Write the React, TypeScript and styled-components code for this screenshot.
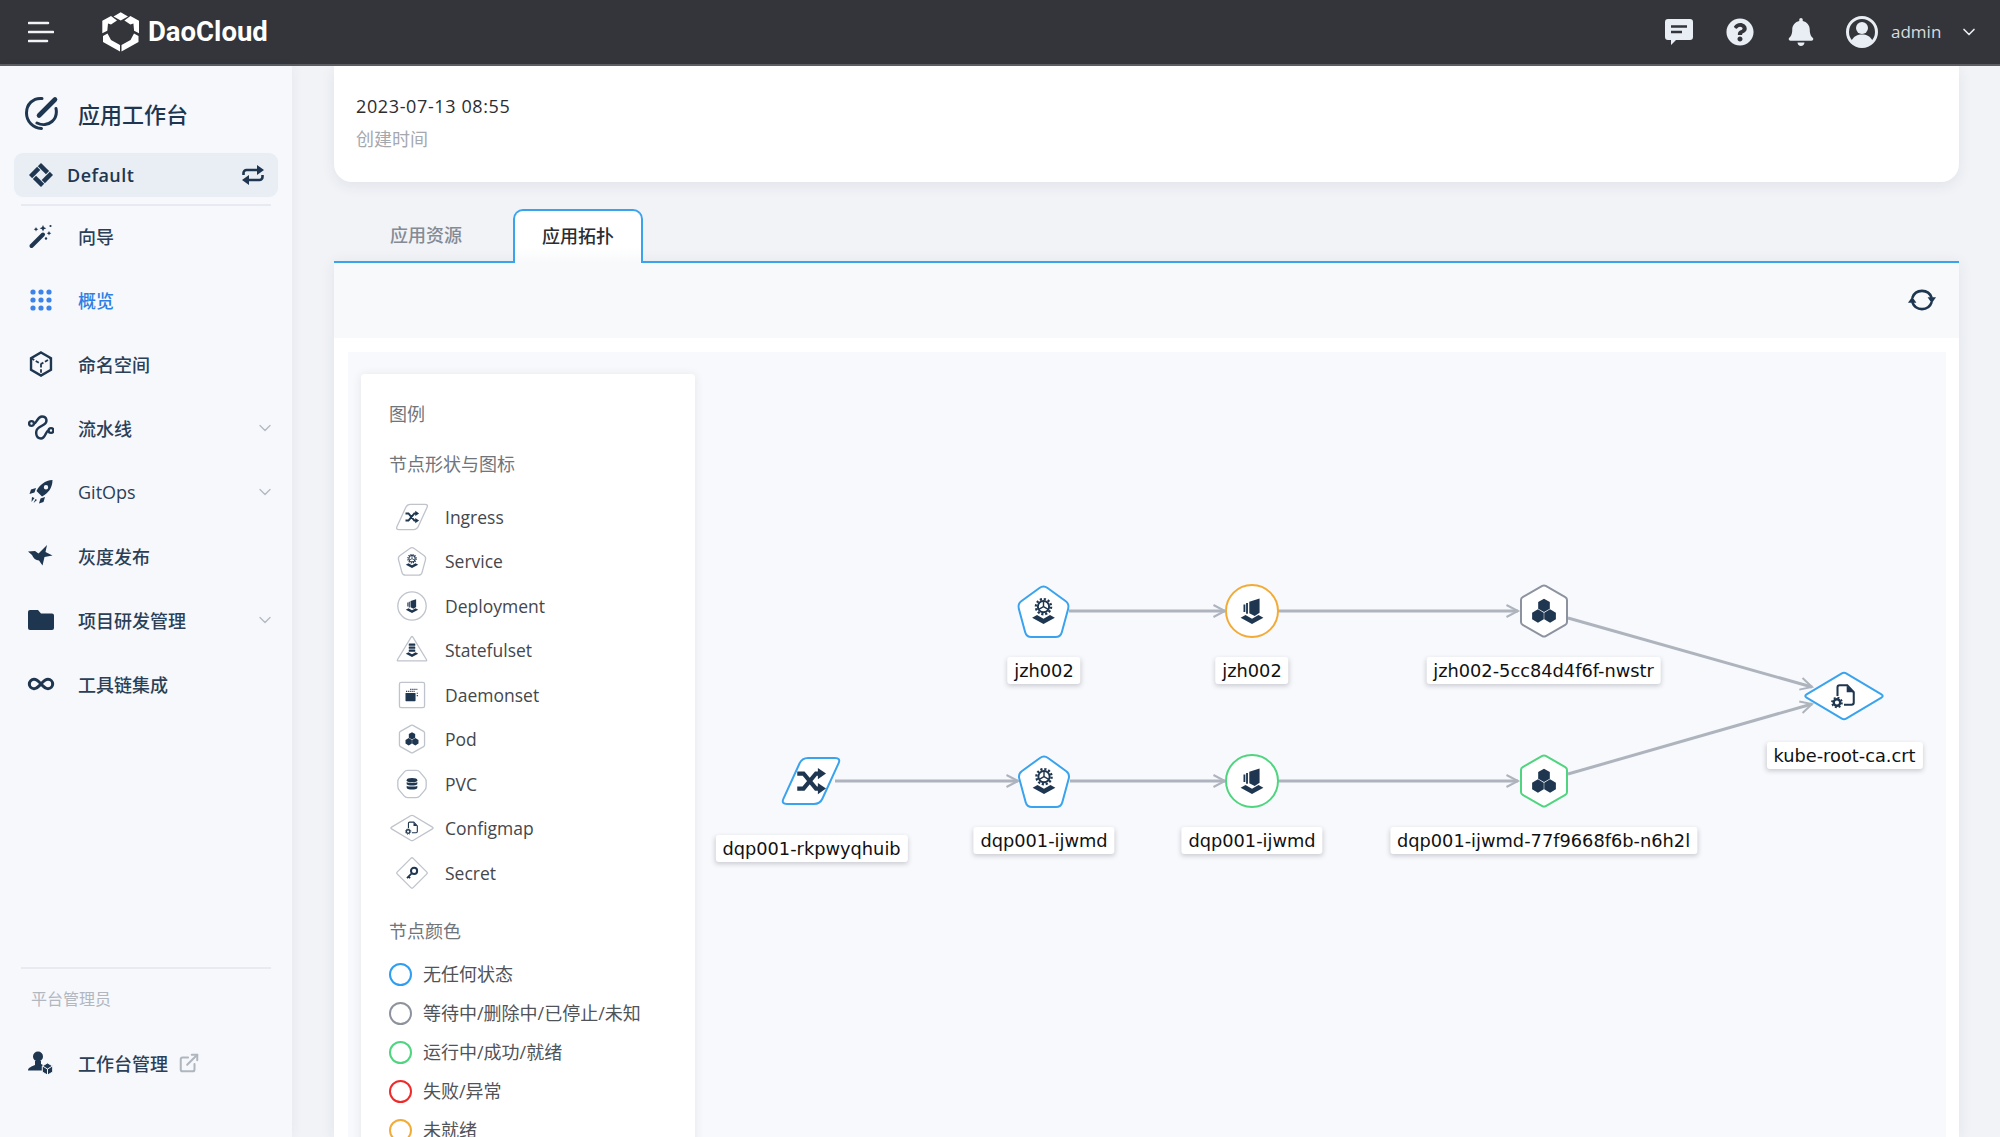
import React from "react";
import styled, { createGlobalStyle } from "styled-components";
import { ChevronDown, ExternalLink, Infinity as InfinityIcon } from "lucide-react";
import { FaBell, FaQuestionCircle } from "react-icons/fa";

const NAVY = "#1f3650";
const BLUE = "#3aa3ee";
const GREEN = "#4fd47f";
const GREY = "#8d939e";
const ORANGE = "#f2ab36";
const RED = "#ee2a2a";
const LEGEND_LINE = "#bfc4cc";
const SANS = `"Open Sans", "Noto Sans CJK SC", sans-serif`;

const Global = createGlobalStyle`
  html, body { margin: 0; padding: 0; background: #f1f3f7; }
  body { font-family: ${SANS}; overflow: hidden; }
  * { box-sizing: border-box; }
`;

const Page = styled.div`
  width: 2000px;
  height: 1137px;
  display: flex;
  flex-direction: column;
  overflow: hidden;
`;
const TopBar = styled.header`
  height: 66px;
  flex: none;
  background: #33353b;
  border-bottom: 2px solid #5c5e63;
  display: flex;
  align-items: center;
  padding: 0 21px 0 28px;
`;
const Burger = styled.svg`
  width: 26px;
  height: 24px;
  margin-right: 48px;
`;
const Logo = styled.svg`
  width: 37px;
  height: 40px;
  margin-right: 9px;
`;
const Brand = styled.span`
  font-family: "Roboto", sans-serif;
  font-weight: 700;
  font-size: 27.5px;
  margin-bottom: 2px;
  color: #fff;
`;
const TopRight = styled.div`
  margin-left: auto;
  display: flex;
  align-items: center;
  color: #e9edf4;
`;
const TopIcon = styled.span`
  width: 40px;
  height: 40px;
  margin-right: 21px;
  display: flex;
  align-items: center;
  justify-content: center;
`;
const Avatar = styled(TopIcon)`
  margin-right: 9px;
`;
const UserName = styled.span`
  width: 68px;
  font-size: 17px;
  margin-bottom: 2px;
  color: #d9dbde;
  font-weight: 400;
`;
const Body = styled.div`
  flex: 1;
  display: flex;
  min-height: 0;
`;
const Sidebar = styled.aside`
  width: 292px;
  flex: none;
  background: #f6f8fc;
  box-shadow: 2px 0 10px rgba(40, 50, 70, 0.05);
  display: flex;
  flex-direction: column;
  color: ${NAVY};
  position: relative;
  z-index: 1;
`;
const SideTitle = styled.div`
  height: 87px;
  display: flex;
  align-items: center;
  padding: 6px 0 0 25px;
  gap: 19px;
  font-size: 22px;
  font-weight: 500;
`;
const WorkspacePill = styled.div`
  height: 44px;
  margin: 0 14px;
  padding: 0 13px 0 15px;
  background: #e9eef4;
  border-radius: 9px;
  display: flex;
  align-items: center;
  gap: 14px;
  font-size: 18px;
  font-weight: 600;
`;
const PillName = styled.span`
  flex: 1;
  letter-spacing: 0.45px;
`;
const SideRule = styled.div`
  height: 2px;
  margin: 7px 21px -2px;
  background: #e7eaf0;
  flex: none;
`;
const NavItem = styled.div<{ $active?: boolean }>`
  height: 64px;
  flex: none;
  display: flex;
  align-items: center;
  padding: 0 17px 0 24px;
  gap: 20px;
  font-size: 18px;
  font-weight: 500;
  color: ${(p) => (p.$active ? "#2e7fe3" : "#2b3f57")};
`;
const NavGlyph = styled.span`
  width: 34px;
  height: 34px;
  flex: none;
  display: flex;
  align-items: center;
  justify-content: center;
  color: ${NAVY};
`;
const NavText = styled.span`
  flex: 1;
  display: flex;
  align-items: center;
  gap: 10px;
`;
const SideFooter = styled.div`
  margin-top: auto;
  padding-bottom: 42px;
`;
const FooterLabel = styled.div`
  font-size: 16px;
  line-height: 24px;
  margin: 20px 0 20px 31px;
  color: #b2b7bf;
  font-weight: 400;
`;
const Main = styled.main`
  flex: 1;
  min-width: 0;
  padding: 0 41px 0 42px;
  display: flex;
  flex-direction: column;
  overflow: hidden;
`;
const InfoCard = styled.section`
  height: 116px;
  flex: none;
  background: #fff;
  border-radius: 0 0 18px 18px;
  box-shadow: 0 4px 14px rgba(40, 50, 70, 0.08);
  padding: 26px 22px 0;
`;
const InfoValue = styled.div`
  font-size: 18px;
  line-height: 28px;
  letter-spacing: 0.62px;
  color: #2b2d30;
`;
const InfoLabel = styled.div`
  font-size: 18px;
  line-height: 28px;
  margin-top: 5px;
  color: #a5a9ae;
`;
const Tabs = styled.div`
  height: 54px;
  flex: none;
  margin-top: 27px;
  margin-bottom: -2px;
  display: flex;
  position: relative;
  z-index: 2;
`;
const Tab = styled.div<{ $active?: boolean; $w: number }>`
  width: ${(p) => p.$w}px;
  height: 54px;
  padding: 0 0 5px ${(p) => (p.$active ? 0 : 5)}px;
  display: flex;
  align-items: center;
  justify-content: center;
  font-size: 18px;
  font-weight: 500;
  color: ${(p) => (p.$active ? "#2b2d30" : "#848b94")};
  ${(p) =>
    p.$active
      ? `background: linear-gradient(#fff 70%, #f8f9fb);
         border: 2px solid ${BLUE};
         border-bottom: none;
         border-radius: 10px 10px 0 0;`
      : ""}
`;
const Panel = styled.section`
  flex: 1;
  min-height: 0;
  background: #fff;
  border-top: 2px solid ${BLUE};
  box-shadow: 0 2px 14px rgba(40, 50, 70, 0.08);
  display: flex;
  flex-direction: column;
`;
const Toolbar = styled.div`
  height: 75px;
  flex: none;
  background: #f8f9fb;
  display: flex;
  align-items: center;
  justify-content: flex-end;
  padding: 0 23px 2px 0;
  color: ${NAVY};
`;
const CanvasWrap = styled.div`
  flex: 1;
  min-height: 0;
  padding: 14px 13px 0 14px;
  display: flex;
`;
const Canvas = styled.div`
  flex: 1;
  position: relative;
  background: #f8f9fc;
  padding: 22px 0 0 13px;
  overflow: hidden;
`;
const Legend = styled.div`
  width: 334px;
  height: 800px;
  background: #fff;
  border-radius: 4px 4px 0 0;
  box-shadow: 0 1px 10px rgba(40, 50, 70, 0.1);
  padding: 28px 28px 0;
  position: relative;
  z-index: 1;
`;
const LegendHead = styled.div<{ $mt?: number }>`
  font-size: 18px;
  line-height: 24px;
  margin-top: ${(p) => p.$mt ?? 0}px;
  color: #70757c;
`;
const ShapeList = styled.div`
  margin-top: 18.5px;
`;
const ShapeRow = styled.div`
  height: 44.5px;
  display: flex;
  align-items: center;
  gap: 10px;
  font-size: 17.5px;
  color: #44474c;
`;
const ShapeSvg = styled.svg`
  width: 46px;
  height: 36px;
  flex: none;
`;
const ColorList = styled.div`
  margin-top: 10.5px;
`;
const ColorRow = styled.div`
  height: 39px;
  display: flex;
  align-items: center;
  gap: 12px;
  font-size: 18px;
  color: #505358;
`;
const Dot = styled.span<{ $c: string }>`
  width: 23px;
  height: 23px;
  flex: none;
  margin: 2px -1px 0 0;
  border-radius: 50%;
  border: 2px solid ${(p) => p.$c};
`;
const GraphSvg = styled.svg`
  position: absolute;
  left: 0;
  top: 0;
  width: 1598px;
  height: 785px;
`;
const GraphLabel = styled.span<{ $x: number; $y: number }>`
  position: absolute;
  left: ${(p) => p.$x - 348}px;
  top: ${(p) => p.$y - 352}px;
  transform: translateX(-50%);
  height: 27px;
  padding: 0 7px;
  display: flex;
  align-items: center;
  white-space: nowrap;
  background: #fff;
  border-radius: 3px;
  box-shadow: 0 2px 5px rgba(30, 40, 60, 0.22);
  font-family: "DejaVu Sans", sans-serif;
  font-size: 17.8px;
  color: #111;
`;

type Pt = [number, number];
function rounded(pts: Pt[], r: number): string {
  const n = pts.length;
  let d = "";
  for (let i = 0; i < n; i++) {
    const p = pts[i];
    const a = pts[(i + n - 1) % n];
    const b = pts[(i + 1) % n];
    const la = Math.hypot(a[0] - p[0], a[1] - p[1]);
    const lb = Math.hypot(b[0] - p[0], b[1] - p[1]);
    const s: Pt = [p[0] + ((a[0] - p[0]) * r) / la, p[1] + ((a[1] - p[1]) * r) / la];
    const e: Pt = [p[0] + ((b[0] - p[0]) * r) / lb, p[1] + ((b[1] - p[1]) * r) / lb];
    d += `${i === 0 ? "M" : "L"}${s[0].toFixed(2)} ${s[1].toFixed(2)}Q${p[0]} ${p[1]} ${e[0].toFixed(2)} ${e[1].toFixed(2)}`;
  }
  return d + "Z";
}
const hexPts = (cx: number, cy: number, r: number) =>
  [0, 1, 2, 3, 4, 5]
    .map((i) => {
      const t = (Math.PI / 3) * i - Math.PI / 2;
      return `${(cx + r * Math.cos(t)).toFixed(2)},${(cy + r * Math.sin(t)).toFixed(2)}`;
    })
    .join(" ");

const Tray = () => <path d="M12 24 L1.5 18.3 L6 15.8 L12 19.2 L18 15.8 L22.5 18.3Z" fill={NAVY} />;

type Kind =
  | "ingress" | "service" | "deployment" | "statefulset" | "daemonset"
  | "pod" | "pvc" | "configmap" | "secret";

function Glyph({ kind }: { kind: Kind }) {
  switch (kind) {
    case "ingress":
      return (
        <g>
          <path d="M1 6h5l10 12h3M1 18h5L16 6h3" fill="none" stroke={NAVY} strokeWidth="3.4" />
          <polygon points="17.5,1.5 24,6 17.5,10.5" fill={NAVY} />
          <polygon points="17.5,13.5 24,18 17.5,22.5" fill={NAVY} />
        </g>
      );
    case "service":
      return (
        <g>
          <circle cx="12" cy="8" r="7" fill="none" stroke={NAVY} strokeWidth="2.2" strokeDasharray="2 1.67" />
          <circle cx="12" cy="8" r="5.2" fill="none" stroke={NAVY} strokeWidth="1.8" />
          <path d="M12 8V3M12 8l4.4 2.5M12 8l-4.4 2.5" stroke={NAVY} strokeWidth="1.3" />
          <Tray />
        </g>
      );
    case "deployment":
      return (
        <g>
          <path d="M9.5 3.4 L19 0.5 V13.5 L14.5 16.5 L9.5 14Z" fill={NAVY} />
          <path d="M7.4 4.6V14.5M5 6V13" stroke={NAVY} strokeWidth="1.7" fill="none" />
          <Tray />
        </g>
      );
    case "statefulset":
      return (
        <g>
          <rect x="6.5" y="1" width="11" height="4" rx="1" fill={NAVY} />
          <rect x="6.5" y="6" width="11" height="4" rx="1" fill={NAVY} />
          <rect x="6.5" y="11" width="11" height="4" rx="1" fill={NAVY} />
          <Tray />
        </g>
      );
    case "daemonset":
      return (
        <g>
          <rect x="1" y="8.5" width="17" height="14" rx="1" fill={NAVY} />
          <path d="M2 6h15M9 2.500h12M20 9h3M20 13h3" stroke={NAVY} strokeWidth="2" strokeDasharray="2 1.5" />
        </g>
      );
    case "pod":
      return (
        <g fill={NAVY}>
          <polygon points={hexPts(12, 6.8, 6.2)} />
          <polygon points={hexPts(6.4, 16.6, 6.2)} />
          <polygon points={hexPts(17.6, 16.6, 6.2)} />
        </g>
      );
    case "pvc":
      return (
        <g fill={NAVY}>
          <ellipse cx="12" cy="5.5" rx="9" ry="3.5" />
          <path d="M3 8.8c2 2 16 2 18 0v3.6c-2 3-16 3-18 0z" />
          <path d="M3 14.8c2 2 16 2 18 0v3.8c-2 3.4-16 3.4-18 0z" />
        </g>
      );
    case "configmap":
      return (
        <g>
          <path d="M6 12V4a2 2 0 0 1 2-2h7l6 6.5V18a2 2 0 0 1-2 2h-7" fill="none" stroke={NAVY} strokeWidth="1.9" />
          <path d="M14.5 2.5V8.5h6.5z" fill={NAVY} />
          <circle cx="5.5" cy="18" r="3" fill="none" stroke={NAVY} strokeWidth="2.2" />
          <circle cx="5.5" cy="18" r="4.6" fill="none" stroke={NAVY} strokeWidth="1.6" strokeDasharray="1.8 1.8" />
        </g>
      );
    case "secret":
      return (
        <g>
          <circle cx="15.5" cy="8.5" r="5.2" fill="none" stroke={NAVY} strokeWidth="3.4" />
          <path d="M11.5 12.5 L3.5 20.5M6 18l2.8 2.8" stroke={NAVY} strokeWidth="3" fill="none" />
        </g>
      );
  }
}

const SHAPES: Record<Kind, string> = {
  ingress: rounded([[-9, -23], [30, -23], [9, 23], [-30, 23]], 6),
  service: rounded([[0, -26], [26, -7], [17, 26], [-17, 26], [-26, -7]], 5),
  deployment: "M-26 0a26 26 0 1 0 52 0a26 26 0 1 0 -52 0Z",
  statefulset: rounded([[0, -26], [28, 20], [-28, 20]], 3),
  daemonset: rounded([[-23, -23], [23, -23], [23, 23], [-23, 23]], 3),
  pod: rounded([[0, -26], [23, -13], [23, 13], [0, 26], [-23, 13], [-23, -13]], 2),
  pvc: rounded([[-12, -25], [12, -25], [26, -8], [26, 8], [12, 25], [-12, 25], [-26, 8], [-26, -8]], 4),
  configmap: rounded([[-40, 0], [0, -24], [40, 0], [0, 24]], 3),
  secret: rounded([[-29, 0], [0, -29], [29, 0], [0, 29]], 3),
};

function Node({ kind, color, x = 0, y = 0, glyph = 26, line = 2 }: {
  kind: Kind; color: string; x?: number; y?: number; glyph?: number; line?: number;
}) {
  return (
    <g transform={`translate(${x} ${y})`}>
      <path d={SHAPES[kind]} fill="#fff" stroke={color} strokeWidth={line} />
      <g transform={`translate(${-glyph / 2} ${-glyph / 2}) scale(${glyph / 24})`}>
        <Glyph kind={kind} />
      </g>
    </g>
  );
}

function Edge({ a, b }: { a: Pt; b: Pt }) {
  const t = Math.atan2(b[1] - a[1], b[0] - a[0]);
  const arm = (d: number): string => {
    const ang = t + Math.PI + d;
    return `${(b[0] + 13 * Math.cos(ang)).toFixed(2)} ${(b[1] + 13 * Math.sin(ang)).toFixed(2)}`;
  };
  return (
    <g fill="none" stroke="#aeb4bd">
      <path d={`M${a[0]} ${a[1]}L${b[0]} ${b[1]}`} strokeWidth="3" />
      <path d={`M${arm(0.48)}L${b[0]} ${b[1]}L${arm(-0.48)}`} strokeWidth="2" />
    </g>
  );
}

const BurgerIcon = () => (
  <Burger viewBox="0 0 26 24">
    <path d="M1 3h19M1 12h24M1 21h18" stroke="#f2f3f5" strokeWidth="2.6" strokeLinecap="round" />
  </Burger>
);

const LogoIcon = () => (
  <Logo viewBox="0 0 37 40">
    <g fill="#fff">
      <polygon points="18.7,0.3 26,4.500 18.7,8.500 11.500,4.500" />
      <polygon points="9,3.900 15,8.500 9,12.500 6,11.500 5.300,18.700 0.300,21.300 0.300,8.700" />
      <polygon points="28.400,3.900 22.400,8.500 28.400,12.500 31.400,11.500 32.100,18.700 37,21.300 37,8.700" />
      <polygon points="1,24 5.500,21.500 9,28 18,33 18,39.500 1,30" />
      <polygon points="36.500,24 32,21.500 28.500,28 19.500,33 19.500,39.500 36.500,30" />
    </g>
  </Logo>
);

const ChatIcon = () => (
  <svg width="30" height="30" viewBox="0 0 30 30">
    <path d="M4 2h22a3 3 0 0 1 3 3v15a3 3 0 0 1-3 3H12l-5 5v-5H4a3 3 0 0 1-3-3V5a3 3 0 0 1 3-3z" fill="#e9edf4" />
    <path d="M7 9.5h16M7 15h11" stroke="#33353b" strokeWidth="2.6" />
  </svg>
);

const AvatarIcon = () => (
  <svg width="32" height="32" viewBox="0 0 32 32">
    <circle cx="16" cy="16" r="14.5" fill="none" stroke="#e9edf4" strokeWidth="3" />
    <circle cx="16" cy="12" r="6" fill="#e9edf4" />
    <path d="M5.5 25c2-5 6-6.5 10.5-6.5s8.500 1.500 10.500 6.500c-3 3-6.500 4.500-10.500 4.500s-7.500-1.500-10.500-4.500z" fill="#e9edf4" />
  </svg>
);

const WorkspaceIcon = () => (
  <svg width="34" height="34" viewBox="0 0 34 34" fill="none" stroke={NAVY} strokeWidth="3" strokeLinecap="round">
    <path d="M17 2.500C8 1.500 1.500 8.500 1.500 17c0 8.500 6.500 15 15 15.500" />
    <path d="M12 27c5 2.500 11 2 15-1.500 4-3.500 5-8 4-13" />
    <path d="M30 3.500 L14 19.500" strokeWidth="4.600" />
  </svg>
);

const DefaultIcon = () => (
  <svg width="24" height="24" viewBox="0 0 24 24" fill={NAVY} style={{ flex: "none" }}>
    <g transform="rotate(45 12 12)">
      <rect x="3.500" y="3.500" width="11.500" height="4.500" />
      <rect x="16" y="3.500" width="4.500" height="11.500" />
      <rect x="9" y="16" width="11.500" height="4.500" />
      <rect x="3.500" y="9" width="4.500" height="11.500" />
    </g>
  </svg>
);

const SwapIcon = () => (
  <svg width="24" height="24" viewBox="0 0 24 24" style={{ flex: "none" }} fill={NAVY}>
    <path d="M2.500 12V10a3 3 0 0 1 3-3H17M21.500 12v2a3 3 0 0 1-3 3H7" fill="none" stroke={NAVY} strokeWidth="2.600" />
    <polygon points="16,2 23,7 16,12" />
    <polygon points="8,12 1,17 8,22" />
  </svg>
);

const WandIcon = () => (
  <svg width="26" height="26" viewBox="0 0 26 26" fill={NAVY}>
    <path d="M3.500 23 L15 11.500" stroke={NAVY} strokeWidth="4" strokeLinecap="round" />
    <path d="M15 2l1 2.300 2.300 1-2.300 1-1 2.300-1-2.300-2.300-1 2.300-1z" />
    <path d="M8 4l.7 1.600 1.600.7-1.600.7-.7 1.600-.7-1.600-1.600-.7 1.600-.7z" />
    <path d="M21 8l.7 1.600 1.600.7-1.600.7-.7 1.600-.7-1.600-1.600-.7 1.600-.7z" />
    <circle cx="22.500" cy="3" r="1.100" />
    <circle cx="18" cy="15.500" r="1.200" />
  </svg>
);

const DotsIcon = () => (
  <svg width="22" height="22" viewBox="0 0 22 22" fill="#3b83e6">
    {[3, 11, 19].flatMap((y) => [3, 11, 19].map((x) => <circle key={`${x}-${y}`} cx={x} cy={y} r="2.600" />))}
  </svg>
);

const NamespaceIcon = () => (
  <svg width="26" height="26" viewBox="0 0 26 26" fill="none" stroke={NAVY}>
    <polygon points={hexPts(13, 13, 11.500)} strokeWidth="2.400" />
    <path d="M3.200 7.300 L13 13 L22.800 7.300 M13 13 V24.500" strokeWidth="1.800" strokeDasharray="3.500 1.800" />
  </svg>
);

const PipelineIcon = () => (
  <svg width="26" height="26" viewBox="0 0 26 26" fill="none" stroke={NAVY} strokeWidth="2.400">
    <circle cx="3.500" cy="8.500" r="2.400" />
    <circle cx="23" cy="15.500" r="2.400" />
    <path d="M6 8.500C9 8.500 9 1.500 14 1.500C19 1.500 20 7 16 9.500L11 12.500C7 15 7 23.500 13 23.500C17.500 23.500 17.500 16 20.500 15.500" />
  </svg>
);

const RocketIcon = () => (
  <svg width="26" height="26" viewBox="0 0 26 26" fill={NAVY}>
    <path fillRule="evenodd" d="M24.500 1C17 1.500 11.500 6 8.500 12L14 17.500C20 14.500 24.500 9 24.500 1ZM18 6a2.200 2.200 0 1 1 0 4.400a2.200 2.200 0 0 1 0-4.400Z" />
    <path d="M8 9 L3 10.500 L1.500 15 L6.500 13.500Z" />
    <path d="M17 18 L15.500 23 L11 24.500 L12.500 19.500Z" />
    <path d="M4 18l2.500 1-3 4z" />
    <path d="M7.500 20l1.500 1-3.500 3z" />
  </svg>
);

const BirdIcon = () => (
  <svg width="26" height="22" viewBox="0 0 26 22" fill={NAVY}>
    <path d="M0 6.500 L7 6 L10.500 8.500 L19 0 L17.500 7 L24.500 10.500 L16.500 12 L14.500 20.500 L11 15.500 Q6 15 4 10 Z" />
  </svg>
);

const FolderIcon = () => (
  <svg width="26" height="20" viewBox="0 0 26 20" fill={NAVY}>
    <path d="M2 0h8l3 3.500h11a2 2 0 0 1 2 2V18a2 2 0 0 1-2 2H2a2 2 0 0 1-2-2V2a2 2 0 0 1 2-2z" />
  </svg>
);

const AdminIcon = () => (
  <svg width="26" height="24" viewBox="0 0 26 24" fill={NAVY}>
    <circle cx="10" cy="5.500" r="5" />
    <path d="M7 10h6v3l3 1.500v5H0c0-3 4-4 7-5.500z" />
    <polygon points={hexPts(19.500, 18, 6)} stroke="#f6f8fc" strokeWidth="1" />
    <path d="M19.500 18v6M19.500 18l-5-3M19.500 18l5-3" stroke="#f6f8fc" strokeWidth="1" />
  </svg>
);

const RefreshIcon = () => (
  <svg width="28" height="28" viewBox="0 0 26 26" fill="none" stroke={NAVY} strokeWidth="2.400">
    <path d="M4 11A9.500 9.500 0 0 1 22 11" />
    <path d="M22 15A9.500 9.500 0 0 1 4 15" />
    <polygon points="18.200,10.500 26,10.500 22.100,16" fill={NAVY} stroke="none" />
    <polygon points="0,15.500 7.800,15.500 3.900,10" fill={NAVY} stroke="none" />
  </svg>
);

const navItems: { label: string; icon: React.ReactNode; arrow?: boolean; active?: boolean }[] = [
  { label: "向导", icon: <WandIcon /> },
  { label: "概览", icon: <DotsIcon />, active: true },
  { label: "命名空间", icon: <NamespaceIcon /> },
  { label: "流水线", icon: <PipelineIcon />, arrow: true },
  { label: "GitOps", icon: <RocketIcon />, arrow: true },
  { label: "灰度发布", icon: <BirdIcon /> },
  { label: "项目研发管理", icon: <FolderIcon />, arrow: true },
  { label: "工具链集成", icon: <InfinityIcon size={28} strokeWidth={2.6} /> },
];

const shapeRows: { kind: Kind; label: string }[] = [
  { kind: "ingress", label: "Ingress" },
  { kind: "service", label: "Service" },
  { kind: "deployment", label: "Deployment" },
  { kind: "statefulset", label: "Statefulset" },
  { kind: "daemonset", label: "Daemonset" },
  { kind: "pod", label: "Pod" },
  { kind: "pvc", label: "PVC" },
  { kind: "configmap", label: "Configmap" },
  { kind: "secret", label: "Secret" },
];

const colorRows = [
  { c: "#2f9df0", label: "无任何状态" },
  { c: GREY, label: "等待中/删除中/已停止/未知" },
  { c: GREEN, label: "运行中/成功/就绪" },
  { c: RED, label: "失败/异常" },
  { c: ORANGE, label: "未就绪" },
];

const nodes: { kind: Kind; color: string; x: number; y: number; glyph?: number }[] = [
  { kind: "service", color: BLUE, x: 1043.5, y: 611 },
  { kind: "deployment", color: ORANGE, x: 1252, y: 611 },
  { kind: "pod", color: GREY, x: 1544, y: 611 },
  { kind: "ingress", color: BLUE, x: 811, y: 781, glyph: 30 },
  { kind: "service", color: BLUE, x: 1044, y: 781 },
  { kind: "deployment", color: GREEN, x: 1252, y: 781 },
  { kind: "pod", color: GREEN, x: 1544, y: 781 },
  { kind: "configmap", color: BLUE, x: 1844, y: 696, glyph: 26 },
];

const edges: [Pt, Pt][] = [
  [[1069, 611], [1225, 611]],
  [[1278, 611], [1518, 611]],
  [[1568, 618], [1812, 687]],
  [[835, 781], [1018, 781]],
  [[1070, 781], [1225, 781]],
  [[1278, 781], [1518, 781]],
  [[1568, 774], [1812, 704]],
];

const labels = [
  { t: "jzh002", x: 1044, y: 657 },
  { t: "jzh002", x: 1252, y: 657 },
  { t: "jzh002-5cc84d4f6f-nwstr", x: 1543.5, y: 657 },
  { t: "dqp001-rkpwyqhuib", x: 811.5, y: 835 },
  { t: "dqp001-ijwmd", x: 1044, y: 827 },
  { t: "dqp001-ijwmd", x: 1252, y: 827 },
  { t: "dqp001-ijwmd-77f9668f6b-n6h2l", x: 1543.5, y: 827 },
  { t: "kube-root-ca.crt", x: 1844.5, y: 742 },
];

export default function App() {
  return (
    <Page>
      <Global />
      <TopBar>
        <BurgerIcon />
        <LogoIcon />
        <Brand>DaoCloud</Brand>
        <TopRight>
          <TopIcon><ChatIcon /></TopIcon>
          <TopIcon><FaQuestionCircle size={28} /></TopIcon>
          <TopIcon><FaBell size={28} /></TopIcon>
          <Avatar><AvatarIcon /></Avatar>
          <UserName>admin</UserName>
          <ChevronDown size={20} strokeWidth={2} />
        </TopRight>
      </TopBar>
      <Body>
        <Sidebar>
          <SideTitle>
            <WorkspaceIcon />
            应用工作台
          </SideTitle>
          <WorkspacePill>
            <DefaultIcon />
            <PillName>Default</PillName>
            <SwapIcon />
          </WorkspacePill>
          <SideRule />
          {navItems.map((n) => (
            <NavItem key={n.label} $active={n.active}>
              <NavGlyph>{n.icon}</NavGlyph>
              <NavText>{n.label}</NavText>
              {n.arrow && <ChevronDown size={20} strokeWidth={1.6} color="#b5bac2" />}
            </NavItem>
          ))}
          <SideFooter>
            <SideRule />
            <FooterLabel>平台管理员</FooterLabel>
            <NavItem>
              <NavGlyph><AdminIcon /></NavGlyph>
              <NavText>
                工作台管理
                <ExternalLink size={22} strokeWidth={2.2} color="#b0b6bf" />
              </NavText>
            </NavItem>
          </SideFooter>
        </Sidebar>
        <Main>
          <InfoCard>
            <InfoValue>2023-07-13 08:55</InfoValue>
            <InfoLabel>创建时间</InfoLabel>
          </InfoCard>
          <Tabs>
            <Tab $w={179}>应用资源</Tab>
            <Tab $w={130} $active>应用拓扑</Tab>
          </Tabs>
          <Panel>
            <Toolbar><RefreshIcon /></Toolbar>
            <CanvasWrap>
              <Canvas>
                <GraphSvg viewBox="348 352 1598 785">
                  {edges.map(([a, b], i) => <Edge key={i} a={a} b={b} />)}
                  {nodes.map((n, i) => <Node key={i} {...n} />)}
                </GraphSvg>
                {labels.map((l, i) => (
                  <GraphLabel key={i} $x={l.x} $y={l.y}>{l.t}</GraphLabel>
                ))}
                <Legend>
                  <LegendHead>图例</LegendHead>
                  <LegendHead $mt={26}>节点形状与图标</LegendHead>
                  <ShapeList>
                    {shapeRows.map((r) => (
                      <ShapeRow key={r.label}>
                        <ShapeSvg viewBox="-42 -33 84 66">
                          <Node kind={r.kind} color={LEGEND_LINE} glyph={26} line={2.4} />
                        </ShapeSvg>
                        {r.label}
                      </ShapeRow>
                    ))}
                  </ShapeList>
                  <LegendHead $mt={24}>节点颜色</LegendHead>
                  <ColorList>
                    {colorRows.map((r) => (
                      <ColorRow key={r.label}>
                        <Dot $c={r.c} />
                        {r.label}
                      </ColorRow>
                    ))}
                  </ColorList>
                </Legend>
              </Canvas>
            </CanvasWrap>
          </Panel>
        </Main>
      </Body>
    </Page>
  );
}
